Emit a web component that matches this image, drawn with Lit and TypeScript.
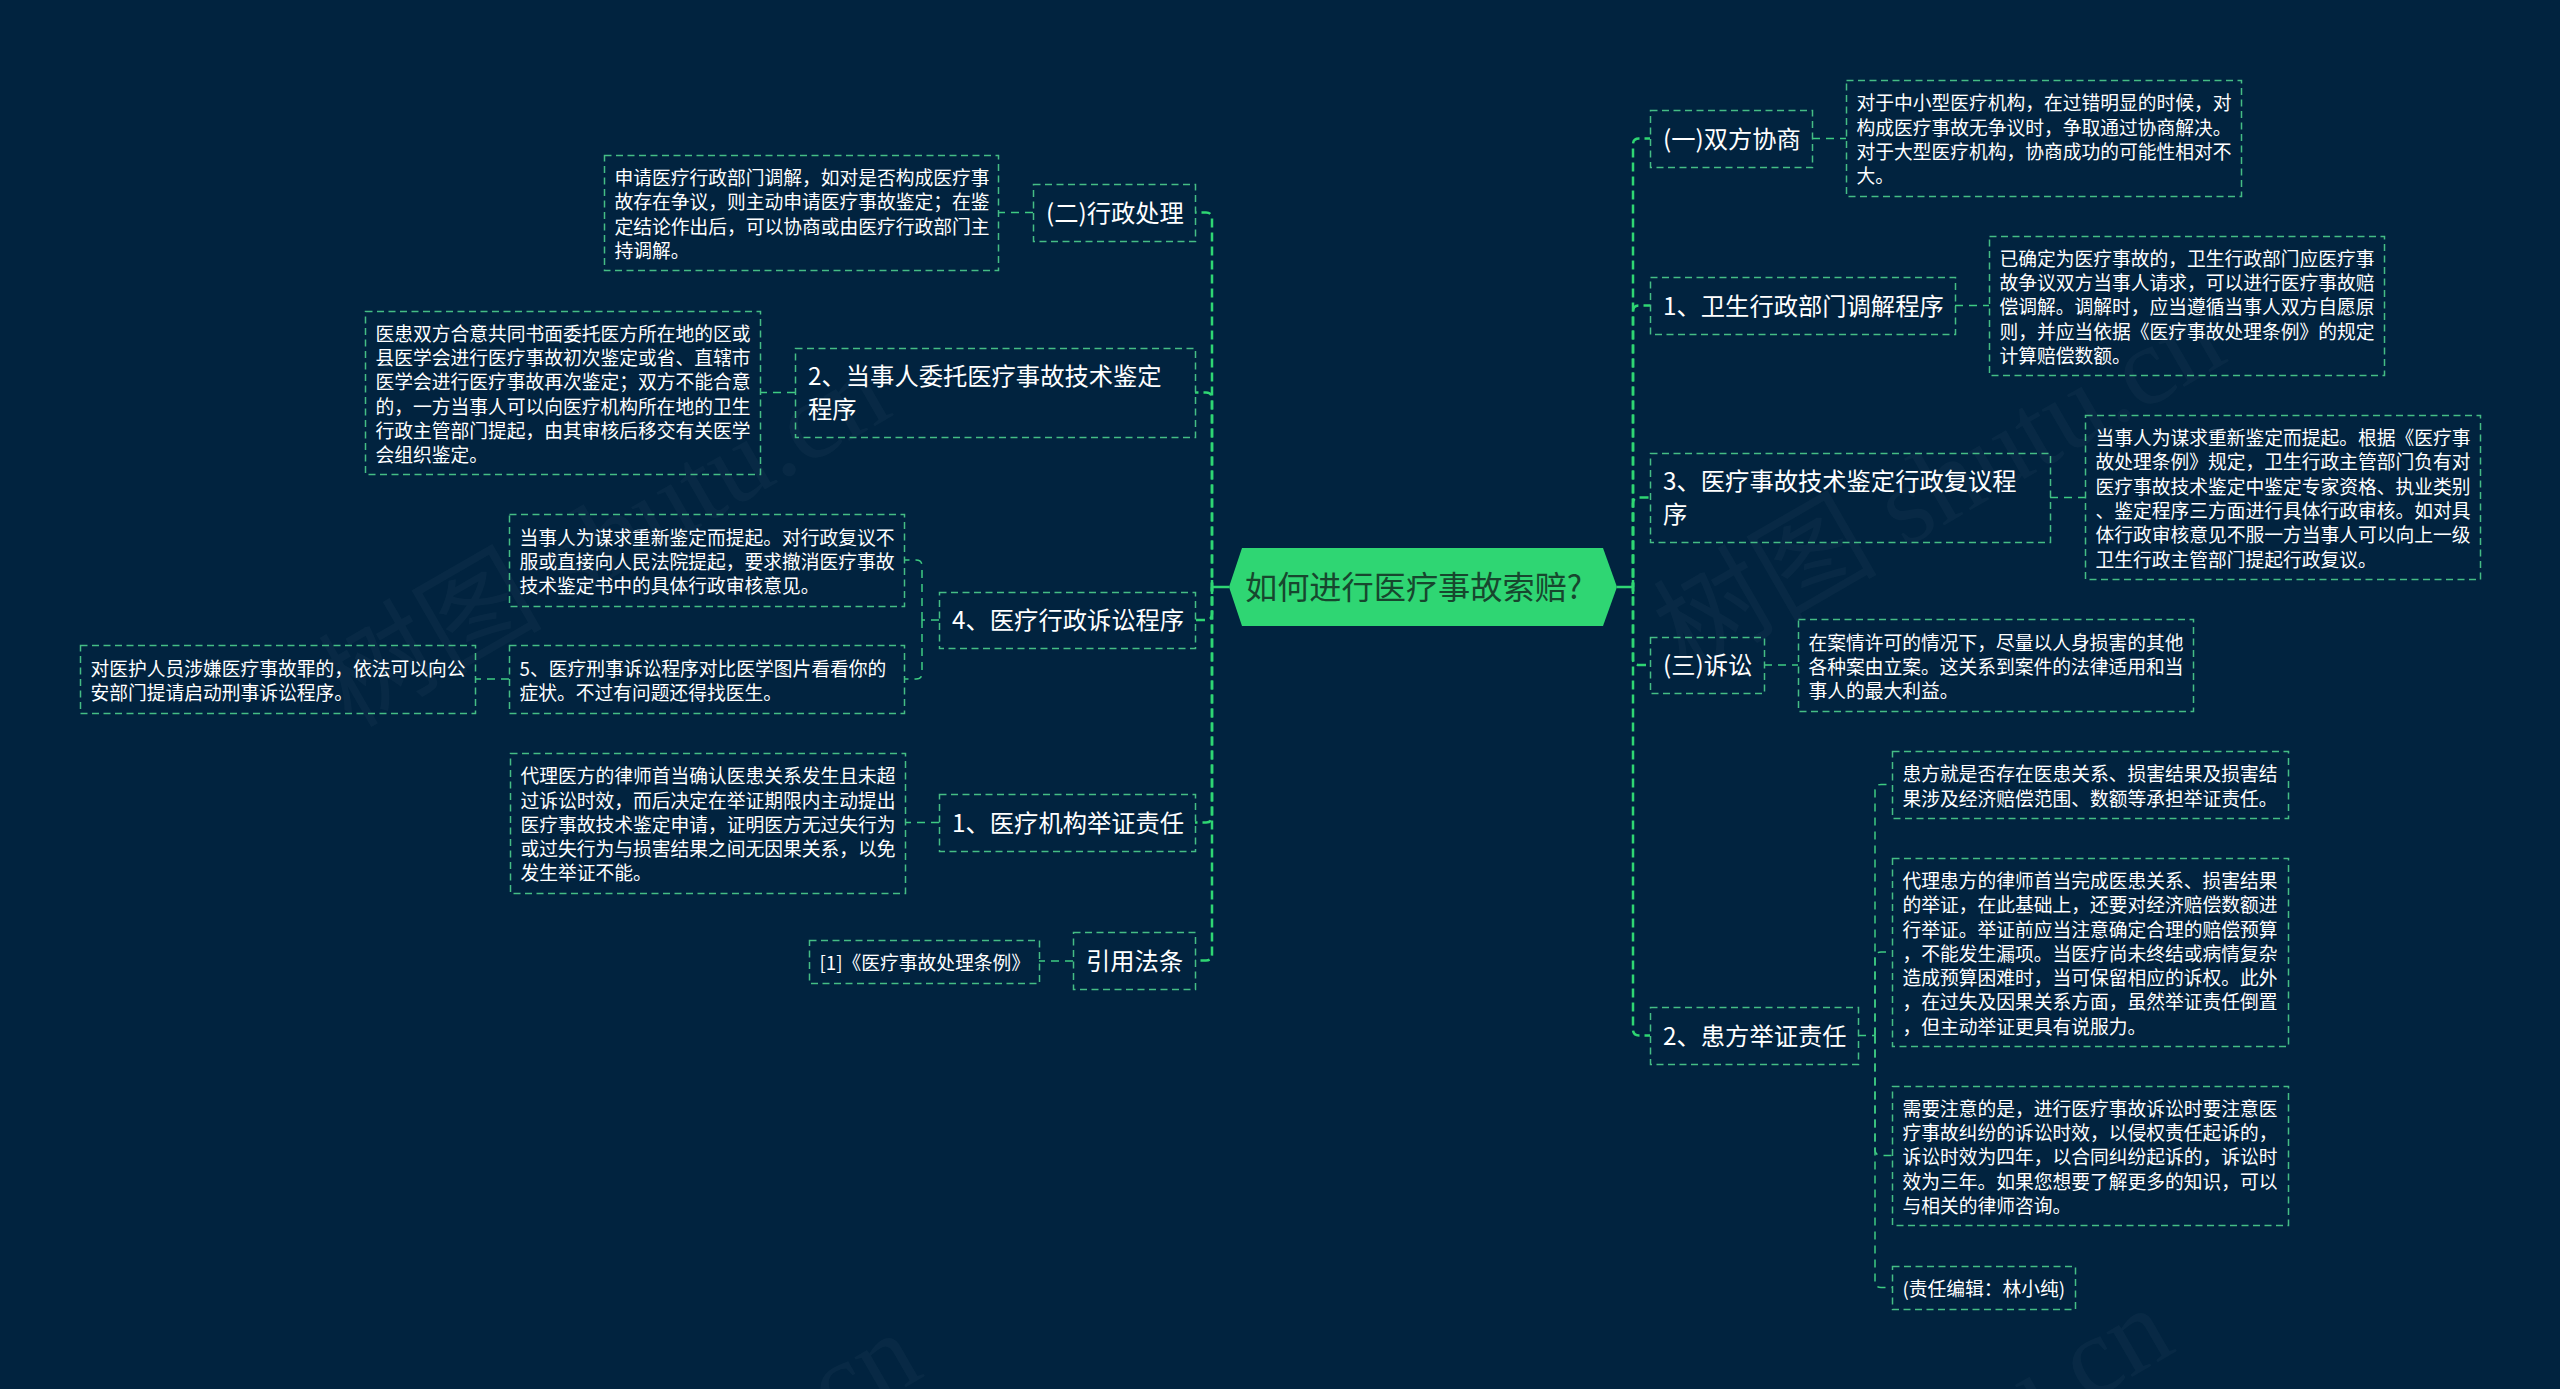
import { LitElement, html, css, svg } from "lit";
import { customElement } from "lit/decorators.js";

type Kind = "topic" | "note";
interface MapNode {
  x: number;
  y: number;
  r: number;
  b: number;
  kind: Kind;
  lines: string[];
}

/* Body copy uses full-width CJK punctuation throughout. */
const wide = (s: string): string =>
  s.replace(/,/g, "\uFF0C").replace(/;/g, "\uFF1B").replace(/:/g, "\uFF1A");

const n = (x: number, y: number, r: number, b: number, kind: Kind, lines: string[]): MapNode => ({
  x,
  y,
  r,
  b,
  kind,
  lines: lines.map(wide),
});

const NODES: MapNode[] = [
  n(1650, 110, 1812, 167, "topic", ["(一)双方协商"]),
  n(1846, 80, 2241, 196, "note", ["对于中小型医疗机构,在过错明显的时候,对", "构成医疗事故无争议时,争取通过协商解决。", "对于大型医疗机构,协商成功的可能性相对不", "大。"]),
  n(1650, 277, 1955, 334, "topic", ["1、卫生行政部门调解程序"]),
  n(1989, 236, 2384, 375, "note", ["已确定为医疗事故的,卫生行政部门应医疗事", "故争议双方当事人请求,可以进行医疗事故赔", "偿调解。调解时,应当遵循当事人双方自愿原", "则,并应当依据《医疗事故处理条例》的规定", "计算赔偿数额。"]),
  n(1650, 453, 2050, 542, "topic", ["3、医疗事故技术鉴定行政复议程", "序"]),
  n(2085, 415, 2480, 579, "note", ["当事人为谋求重新鉴定而提起。根据《医疗事", "故处理条例》规定,卫生行政主管部门负有对", "医疗事故技术鉴定中鉴定专家资格、执业类别", "、鉴定程序三方面进行具体行政审核。如对具", "体行政审核意见不服一方当事人可以向上一级", "卫生行政主管部门提起行政复议。"]),
  n(1650, 637, 1764, 693, "topic", ["(三)诉讼"]),
  n(1798, 619, 2193, 711, "note", ["在案情许可的情况下,尽量以人身损害的其他", "各种案由立案。这关系到案件的法律适用和当", "事人的最大利益。"]),
  n(1650, 1007, 1858, 1064, "topic", ["2、患方举证责任"]),
  n(1892, 751, 2288, 818, "note", ["患方就是否存在医患关系、损害结果及损害结", "果涉及经济赔偿范围、数额等承担举证责任。"]),
  n(1892, 858, 2288, 1046, "note", ["代理患方的律师首当完成医患关系、损害结果", "的举证,在此基础上,还要对经济赔偿数额进", "行举证。举证前应当注意确定合理的赔偿预算", ",不能发生漏项。当医疗尚未终结或病情复杂", "造成预算困难时,当可保留相应的诉权。此外", ",在过失及因果关系方面,虽然举证责任倒置", ",但主动举证更具有说服力。"]),
  n(1892, 1086, 2288, 1225, "note", ["需要注意的是,进行医疗事故诉讼时要注意医", "疗事故纠纷的诉讼时效,以侵权责任起诉的,", "诉讼时效为四年,以合同纠纷起诉的,诉讼时", "效为三年。如果您想要了解更多的知识,可以", "与相关的律师咨询。"]),
  n(1892, 1266, 2075, 1309, "note", ["(责任编辑:林小纯)"]),
  n(1033, 184, 1195, 241, "topic", ["(二)行政处理"]),
  n(604, 155, 998, 270, "note", ["申请医疗行政部门调解,如对是否构成医疗事", "故存在争议,则主动申请医疗事故鉴定;在鉴", "定结论作出后,可以协商或由医疗行政部门主", "持调解。"]),
  n(795, 348, 1195, 437, "topic", ["2、当事人委托医疗事故技术鉴定", "程序"]),
  n(365, 311, 760, 474, "note", ["医患双方合意共同书面委托医方所在地的区或", "县医学会进行医疗事故初次鉴定或省、直辖市", "医学会进行医疗事故再次鉴定;双方不能合意", "的,一方当事人可以向医疗机构所在地的卫生", "行政主管部门提起,由其审核后移交有关医学", "会组织鉴定。"]),
  n(939, 592, 1195, 648, "topic", ["4、医疗行政诉讼程序"]),
  n(509, 514, 904, 606, "note", ["当事人为谋求重新鉴定而提起。对行政复议不", "服或直接向人民法院提起,要求撤消医疗事故", "技术鉴定书中的具体行政审核意见。"]),
  n(509, 645, 904, 713, "note", ["5、医疗刑事诉讼程序对比医学图片看看你的", "症状。不过有问题还得找医生。"]),
  n(80, 645, 475, 713, "note", ["对医护人员涉嫌医疗事故罪的,依法可以向公", "安部门提请启动刑事诉讼程序。"]),
  n(939, 794, 1195, 851, "topic", ["1、医疗机构举证责任"]),
  n(510, 753, 905, 893, "note", ["代理医方的律师首当确认医患关系发生且未超", "过诉讼时效,而后决定在举证期限内主动提出", "医疗事故技术鉴定申请,证明医方无过失行为", "或过失行为与损害结果之间无因果关系,以免", "发生举证不能。"]),
  n(1073, 932, 1195, 989, "topic", ["引用法条"]),
  n(809, 940, 1039, 983, "note", ["[1]《医疗事故处理条例》"]),
];

/* vertical run along x0 starting at y0, then a rounded turn out to x1 at y1 */
const branch = (x0: number, y0: number, x1: number, y1: number): string => {
  if (Math.abs(y1 - y0) < 1) return `M${x0} ${y0}L${x1} ${y1}`;
  const c = 6;
  const sx = x1 > x0 ? 1 : -1;
  const sy = y1 > y0 ? 1 : -1;
  return `M${x0} ${y0}L${x0} ${y1 - sy * c}Q${x0} ${y1} ${x0 + sx * c} ${y1}L${x1} ${y1}`;
};

const MAIN: string[] = [
  ...[138.5, 305.5, 497.5, 665, 1035.5].map((y) => branch(1633, 587, 1650, y)),
  ...[212.5, 392.5, 620, 822.5, 960.5].map((y) => branch(1212, 587, 1195, y)),
];

const SUB: string[] = [
  "M1812 138.5L1846 138.5",
  "M1955 305.5L1989 305.5",
  "M2050 497.5L2085 497.5",
  "M1764 665L1798 665",
  "M1033 212.5L998 212.5",
  "M795 392.5L760 392.5",
  "M939 822.5L905 822.5",
  "M1073 961L1039 961",
  "M509 679L475 679",
  "M1858 1035.5L1875 1035.5",
  ...[784.5, 952, 1155.5, 1287.5].map((y) => branch(1875, 1035.5, 1892, y)),
  "M939 620L922 620",
  ...[560, 679].map((y) => branch(922, 620, 904, y)),
];

const MARKS: Array<[number, number]> = [
  [360, 744],
  [1695, 690],
  [391, 1705],
  [1643, 1680],
];

@customElement("app-root")
export class AppRoot extends LitElement {
  static styles = css`
    :host {
      display: block;
      height: 1389px;
      background: #01233f;
      overflow: hidden;
    }
    .canvas {
      position: relative;
      width: 2560px;
      height: 1389px;
      overflow: hidden;
      font-family: "Noto Sans CJK SC", "Noto Sans", sans-serif;
    }
    .mark {
      position: absolute;
      font-family: "Liberation Serif", "Noto Sans CJK SC", serif;
      font-size: 112px;
      line-height: 1;
      white-space: nowrap;
      color: rgba(255, 255, 255, 0.03);
      transform-origin: 0 100%;
      transform: translateY(-100%) rotate(-30deg);
    }
    .wires {
      position: absolute;
      inset: 0;
    }
    .spine {
      fill: none;
      stroke: #2fd673;
      stroke-width: 2.5;
      stroke-dasharray: 9 5;
      stroke-dashoffset: 4.5;
    }
    .twig {
      fill: none;
      stroke: #3ecb82;
      stroke-width: 1.5;
      stroke-dasharray: 8 6;
    }
    .hub {
      fill: none;
      stroke: #2fd673;
      stroke-width: 2.5;
    }
    .frame {
      fill: none;
      stroke: #45bd85;
      stroke-width: 1.5;
      stroke-dasharray: 7 4.5;
    }
    .hex {
      fill: #2fd673;
    }
    .node {
      position: absolute;
      box-sizing: border-box;
      display: flex;
      flex-direction: column;
      justify-content: center;
      color: #ffffff;
      white-space: nowrap;
    }
    .topic {
      padding: 0 0 3px 13px;
      font-size: 24.3px;
      line-height: 33px;
    }
    .note {
      padding: 2px 0 0 10.5px;
      font-size: 18.75px;
      line-height: 24.3px;
    }
    .root {
      position: absolute;
      left: 1245px;
      top: 548px;
      height: 78px;
      box-sizing: border-box;
      padding-bottom: 3px;
      display: flex;
      align-items: center;
      font-size: 32.2px;
      line-height: 1;
      white-space: nowrap;
      color: #17472e;
    }
  `;

  render() {
    return html`
      <div class="canvas">
        ${MARKS.map(
          ([x, y]) => html`<div class="mark" style="left:${x}px;top:${y}px">树图 shutu.cn</div>`
        )}
        <svg class="wires" width="2560" height="1389" viewBox="0 0 2560 1389">
          ${MAIN.map((d) => svg`<path class="spine" d=${d}></path>`)}
          ${SUB.map((d) => svg`<path class="twig" d=${d}></path>`)}
          <path class="hub" d="M1212 587L1229 587M1617 587L1633 587M1212 580L1212 594M1633 580L1633 594"></path>
          <polygon class="hex" points="1229,587 1242,548 1603,548 1617,587 1603,626 1242,626"></polygon>
          ${NODES.map(
            (m) => svg`<rect class="frame" x=${m.x + 0.5} y=${m.y + 0.5} width=${m.r - m.x} height=${m.b - m.y}></rect>`
          )}
        </svg>
        <div class="root">如何进行医疗事故索赔?</div>
        ${NODES.map(
          (m) => html`<div
            class="node ${m.kind}"
            style="left:${m.x}px;top:${m.y}px;width:${m.r - m.x}px;height:${m.b - m.y}px"
          >
            ${m.lines.map((l) => html`<div>${l}</div>`)}
          </div>`
        )}
      </div>
    `;
  }
}
